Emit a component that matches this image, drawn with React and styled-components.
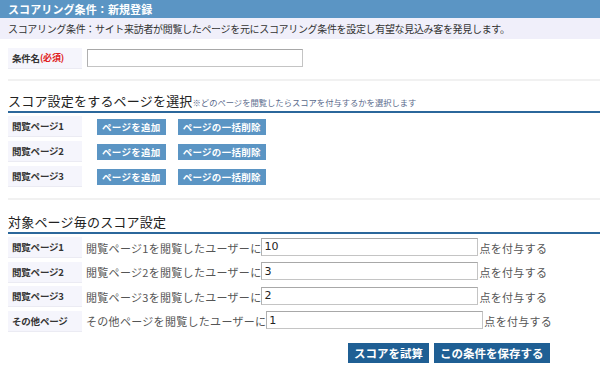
import styled, { createGlobalStyle } from "styled-components";

const GlobalStyle = createGlobalStyle`
  body {
    margin: 0;
    background: #fff;
    font-family: "Noto Sans CJK JP", "Noto Sans", sans-serif;
    color: #333;
  }
`;

const pages = ["閲覧ページ1", "閲覧ページ2", "閲覧ページ3"];

const scores = [
  { label: "閲覧ページ1", text: "閲覧ページ1を閲覧したユーザーに", value: "10" },
  { label: "閲覧ページ2", text: "閲覧ページ2を閲覧したユーザーに", value: "3" },
  { label: "閲覧ページ3", text: "閲覧ページ3を閲覧したユーザーに", value: "2" },
  { label: "その他ページ", text: "その他ページを閲覧したユーザーに", value: "1" },
];

function App() {
  return (
    <>
      <GlobalStyle />
      <TitleBar>スコアリング条件：新規登録</TitleBar>
      <Lead>
        スコアリング条件：サイト来訪者が閲覧したページを元にスコアリング条件を設定し有望な見込み客を発見します。
      </Lead>
      <Content>
        <NameRow>
          <LabelCell>
            条件名<Required>(必須)</Required>
          </LabelCell>
          <NameInput type="text" />
        </NameRow>
        <Separator />

        <Heading>
          スコア設定をするページを選択
          <Note>※どのページを閲覧したらスコアを付与するかを選択します</Note>
        </Heading>
        <Rows $gap={4}>
          {pages.map((p) => (
            <Row key={p}>
              <LabelCell>{p}</LabelCell>
              <Actions>
                <SmallButton>ページを追加</SmallButton>
                <SmallButton>ページの一括削除</SmallButton>
              </Actions>
            </Row>
          ))}
        </Rows>
        <Separator $top={11} />

        <Heading $top={14}>対象ページ毎のスコア設定</Heading>
        <Rows $gap={3.5}>
          {scores.map((s) => (
            <Row key={s.label}>
              <LabelCell>{s.label}</LabelCell>
              <ScoreText>{s.text}</ScoreText>
              <ScoreInput type="text" defaultValue={s.value} />
              <ScoreText $tight>点を付与する</ScoreText>
            </Row>
          ))}
        </Rows>

        <Footer>
          <MainButton>スコアを試算</MainButton>
          <MainButton>この条件を保存する</MainButton>
        </Footer>
      </Content>
    </>
  );
}

export default App;

const TitleBar = styled.div`
  height: 18px;
  background: #5b95c4;
  color: #fff;
  font-weight: bold;
  font-size: 11px;
  line-height: 18px;
  padding-left: 8px;
  letter-spacing: 0.1px;
`;

const Lead = styled.div`
  height: 21px;
  background: #f0effa;
  color: #333;
  font-size: 10px;
  line-height: 21px;
  padding-left: 8px;
  letter-spacing: -0.33px;
  white-space: nowrap;
`;

const Content = styled.div`
  padding: 8px 0 0 8px;
  display: flex;
  flex-direction: column;
`;

const NameRow = styled.div`
  display: flex;
  align-items: center;
  height: 22px;
`;

const LabelCell = styled.div`
  flex: none;
  width: 74px;
  height: 21px;
  padding-left: 4px;
  display: flex;
  align-items: center;
  background: #f5f5fc;
  border-bottom: 1px solid #ebebf3;
  box-sizing: border-box;
  font-size: 9.5px;
  font-weight: bold;
  color: #333;
  white-space: nowrap;
  letter-spacing: -0.2px;
`;

const Required = styled.span`
  color: #e02020;
  font-size: 9px;
`;

const inputBox = `
  box-sizing: border-box;
  height: 18px;
  border: 1px solid #c4c4c4;
  border-top-color: #a8a8a8;
  border-left-color: #b0b0b0;
  padding: 0 2px;
  font-family: "DejaVu Sans", "Noto Sans", sans-serif;
  font-size: 11px;
  color: #222;
  background: #fff;
  outline: none;
`;

const NameInput = styled.input`
  ${inputBox}
  margin-left: 5px;
  width: 216px;
`;

const Separator = styled.div`
  height: 2px;
  background: #f1f1f1;
  margin-top: ${(p) => p.$top ?? 10}px;
`;

const Heading = styled.div`
  margin-top: ${(p) => p.$top ?? 12}px;
  height: 18px;
  border-bottom: 2px solid #2b679b;
  font-size: 13px;
  line-height: 16px;
  color: #222;
  letter-spacing: 0.2px;
  white-space: nowrap;
`;

const Note = styled.span`
  font-size: 8.3px;
  color: #5a6a8c;
  letter-spacing: 0;
`;

const Rows = styled.div`
  display: flex;
  flex-direction: column;
  gap: ${(p) => p.$gap}px;
  margin-top: 3px;
`;

const Row = styled.div`
  display: flex;
  align-items: center;
  height: 21px;
`;

const Actions = styled.div`
  display: flex;
  gap: 12px;
  margin-left: 15px;
`;

const SmallButton = styled.div`
  height: 16px;
  line-height: 16px;
  padding: 0 5px;
  background: #5b95c4;
  color: #fff;
  font-size: 9.5px;
  font-weight: bold;
  letter-spacing: 0.3px;
  white-space: nowrap;
`;

const ScoreText = styled.span`
  margin-left: ${(p) => (p.$tight ? 1 : 4)}px;
  font-size: 11px;
  color: #555;
  white-space: nowrap;
  letter-spacing: 0.3px;
`;

const ScoreInput = styled.input`
  ${inputBox}
  width: 217px;
  margin-top: -2px;
`;

const Footer = styled.div`
  display: flex;
  gap: 5px;
  margin-top: 11px;
  padding-left: 340px;
`;

const MainButton = styled.div`
  height: 20px;
  line-height: 20px;
  padding: 0 6px;
  background: #1f5f94;
  color: #fff;
  font-size: 11.5px;
  font-weight: bold;
  white-space: nowrap;
`;
